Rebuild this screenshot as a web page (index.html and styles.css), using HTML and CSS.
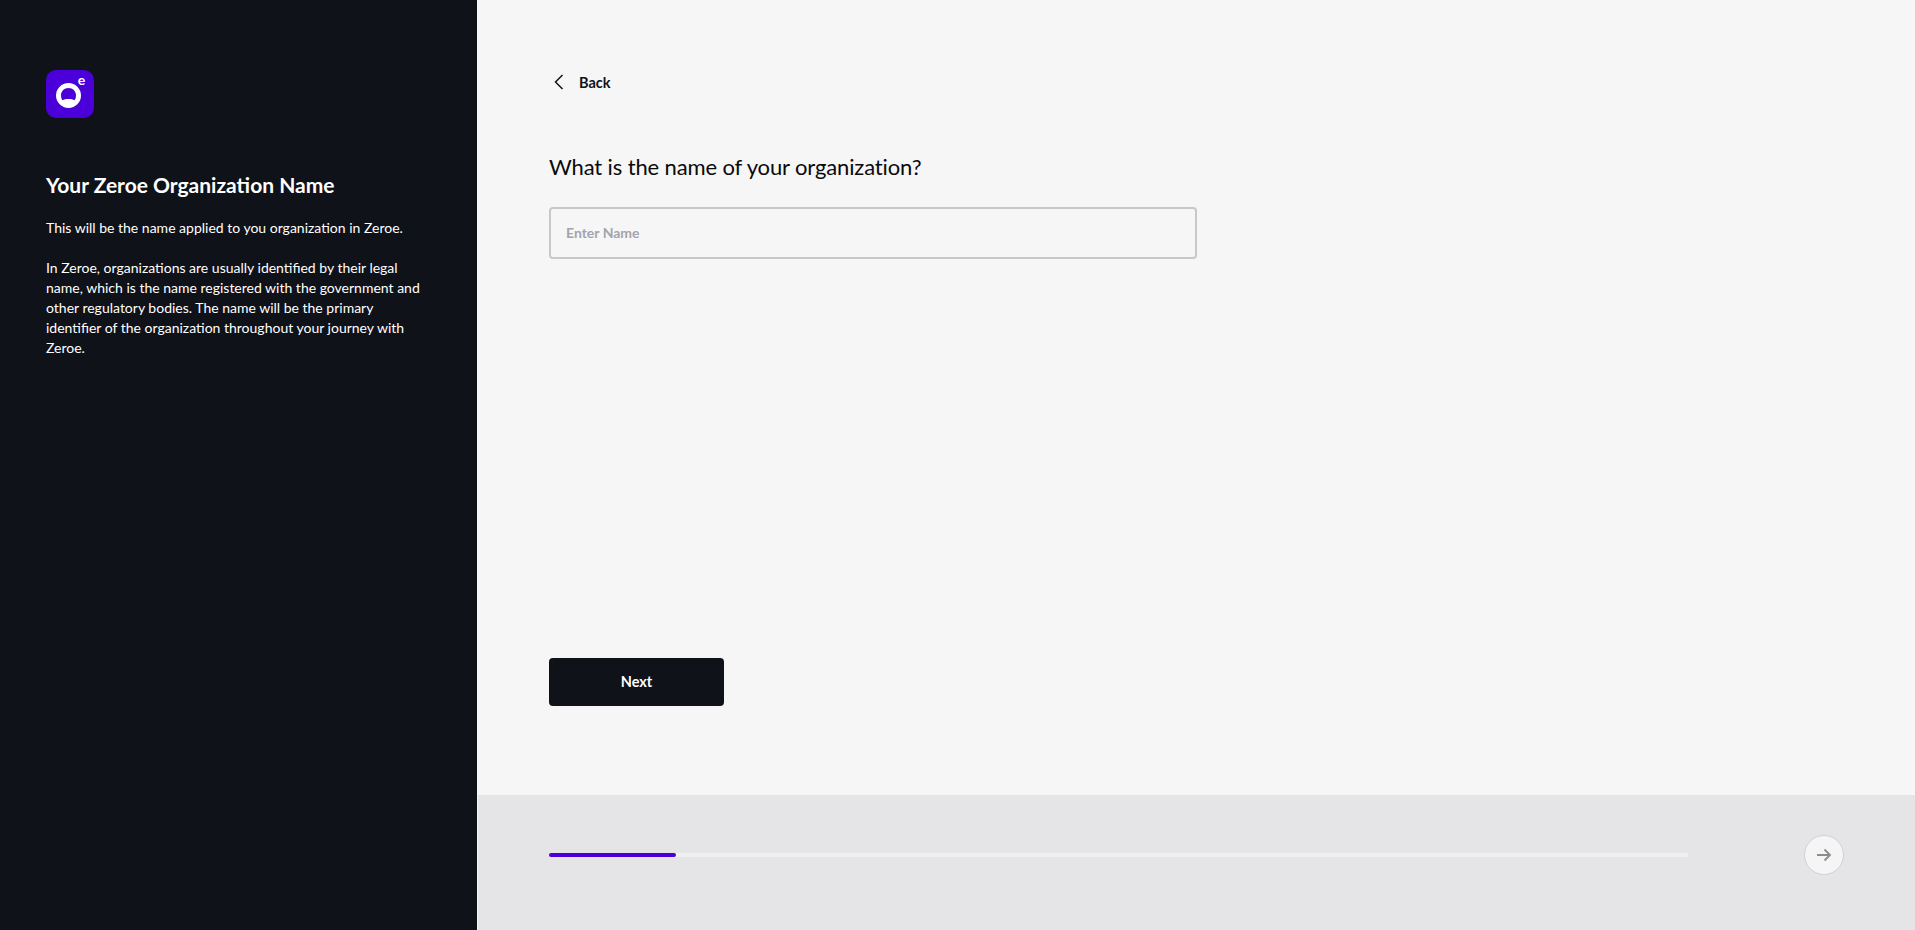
FILE: index.html
```html
<!DOCTYPE html>
<html lang="en">
<head>
<meta charset="utf-8">
<title>Zeroe</title>
<link rel="stylesheet" href="styles.css">
</head>
<body>
<div class="app">
  <aside class="side">
    <svg class="logo" width="48" height="48" viewBox="0 0 48 48" aria-hidden="true">
      <rect width="48" height="48" rx="10" fill="#4c00d9"/>
      <path fill="#fff" fill-rule="evenodd" d="M22.500 13a12.500 12.500 0 1 0 0 25 12.500 12.500 0 1 0 0-25zm0 5c-4.400 0-7.500 3.200-7.500 7.200 0 2.300.6 4 1.400 5 1.600-.8 3.600-1.200 6.100-1.200s4.500.4 6.100 1.200c.8-1 1.400-2.700 1.400-5 0-4-3.100-7.200-7.500-7.200z"/>
      <text x="31.700" y="15" class="logo-e">e</text>
    </svg>
    <h2 class="side-title">Your Zeroe Organization Name</h2>
    <p class="side-text">This will be the name applied to you organization in Zeroe.</p>
    <p class="side-text">In Zeroe, organizations are usually identified by their legal name, which is the name registered with the government and other regulatory bodies. The name will be the primary identifier of the organization throughout your journey with Zeroe.</p>
  </aside>
  <main class="main">
    <section class="content">
      <a class="back" href="#">
        <svg width="10" height="16" viewBox="0 0 10 16" aria-hidden="true"><path d="M8.500 1 1.500 8l7 7" fill="none" stroke="#0f1219" stroke-width="1.500"/></svg>
        <span>Back</span>
      </a>
      <h1 class="question">What is the name of your organization?</h1>
      <input class="field" type="text" placeholder="Enter Name">
      <button class="next" type="button">Next</button>
    </section>
    <footer class="foot">
      <div class="track"><div class="fill"></div></div>
      <button class="round" type="button" aria-label="Next">
        <svg width="16" height="14" viewBox="0 0 16 14" aria-hidden="true"><path d="M1 7h13M8.500 1.500 14 7l-5.500 5.500" fill="none" stroke="#8c8c8e" stroke-width="1.800"/></svg>
      </button>
    </footer>
  </main>
</div>
</body>
</html>
```
FILE: styles.css
```css
* { box-sizing: border-box; }
html, body { margin: 0; height: 100%; }
body { font-family: "Lato", "Liberation Sans", sans-serif; color: #0f1219; overflow: hidden; }
.app { display: flex; height: 930px; }
.side { width: 477px; flex: none; background: #0f1219; color: #fff; padding: 70px 53px 0 46px; }
.logo { display: block; }
.logo-e { font: 700 14px "Lato", sans-serif; fill: #fff; }
.side-title { margin: 54px 0 0; font-size: 21px; line-height: 26px; font-weight: 700; }
.side-text { margin: 20px 0 0; font-size: 14px; line-height: 20px; color: #fff; }
.main { flex: 1; display: flex; flex-direction: column; background: #f6f6f6; }
.content { flex: 1; padding: 72px 0 0 72px; display: flex; flex-direction: column; align-items: flex-start; }
.back { display: flex; align-items: center; gap: 15px; height: 20px; margin-left: 5px; font-size: 14.500px; font-weight: 700; color: #0f1219; text-decoration: none; }
.question { margin: 60px 0 0; font-size: 22px; line-height: 30px; font-weight: 400; letter-spacing: -0.130px; color: #0a0a0a; }
.field { width: 648px; height: 52px; margin-top: 25px; padding: 0 15px 2px; border: 2px solid #c8c8cc; border-radius: 4px; background: #f6f6f6; font: 700 14px "Lato", sans-serif; }
.field::placeholder { color: #a3a3ae; opacity: 1; }
.next { width: 175px; height: 48px; margin-top: 399px; padding: 0 0 1px; border: 0; border-radius: 4px; background: #0f1219; color: #fff; font: 700 14.500px "Lato", sans-serif; }
.foot { height: 135px; flex: none; margin-left: 1px; background: #e5e5e7; display: flex; align-items: flex-start; padding: 58px 71px 0; position: relative; }
.track { width: 1139px; height: 4px; border-radius: 2px; background: #f0f0f1; }
.fill { width: 127px; height: 4px; border-radius: 2px; background: #4c00d9; }
.round { position: absolute; left: 1326px; top: 40px; width: 40px; height: 40px; padding: 0; border: 1px solid #d0d0d6; border-radius: 50%; background: #f5f5f6; display: flex; align-items: center; justify-content: center; }
```
